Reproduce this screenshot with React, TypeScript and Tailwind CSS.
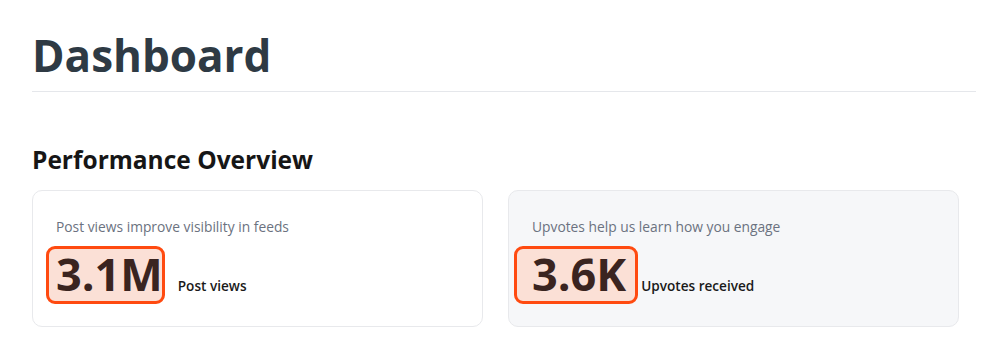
const stats = [
  {
    hint: 'Post views improve visibility in feeds',
    value: '3.1M',
    label: 'Post views',
    muted: false,
  },
  {
    hint: 'Upvotes help us learn how you engage',
    value: '3.6K',
    label: 'Upvotes received',
    muted: true,
  },
];

const StatCard = ({ hint, value, label, muted }: (typeof stats)[number]) => (
  <div
    className={`rounded-[10px] border border-[#e8e9ec] px-[23px] pt-[26px] pb-[23px] ${
      muted ? 'bg-[#f6f7f9]' : 'bg-white'
    }`}
  >
    <p className="text-[13.8px] leading-5 text-[#6b7280]">{hint}</p>
    <div className="mt-[8px] flex items-baseline gap-[15px]">
      <span className="relative text-[45px] font-bold leading-[58px] text-[#3a2420]">
        {/* highlight ring around the metric */}
        <span
          className={`absolute top-[1px] -bottom-[1px] rounded-[9px] border-[3px] border-[#ff4a10] bg-[#fbe0d6] ${
            muted ? '-left-[18px] -right-[12px]' : '-left-[10px] -right-[2px]'
          }`}
        />
        <span className="relative">{value}</span>
      </span>
      <span className="text-[13.6px] font-semibold text-[#1a1a1a]">{label}</span>
    </div>
  </div>
);

export default function App() {
  return (
    <div className="min-h-screen bg-white pl-8 pr-6 pt-[25px] font-['Open_Sans',sans-serif]">
      <h1 className="border-b border-[#e5e7eb] pb-[6px] text-[44px] font-bold leading-[60px] text-[#2e3a44]">
        Dashboard
      </h1>
      <h2 className="mt-[52px] text-[24.5px] font-bold leading-8 text-[#161616]">Performance Overview</h2>
      <div className="mt-[14px] grid w-[927px] grid-cols-2 gap-[25px]">
        {stats.map((s) => (
          <StatCard key={s.label} {...s} />
        ))}
      </div>
    </div>
  );
}
